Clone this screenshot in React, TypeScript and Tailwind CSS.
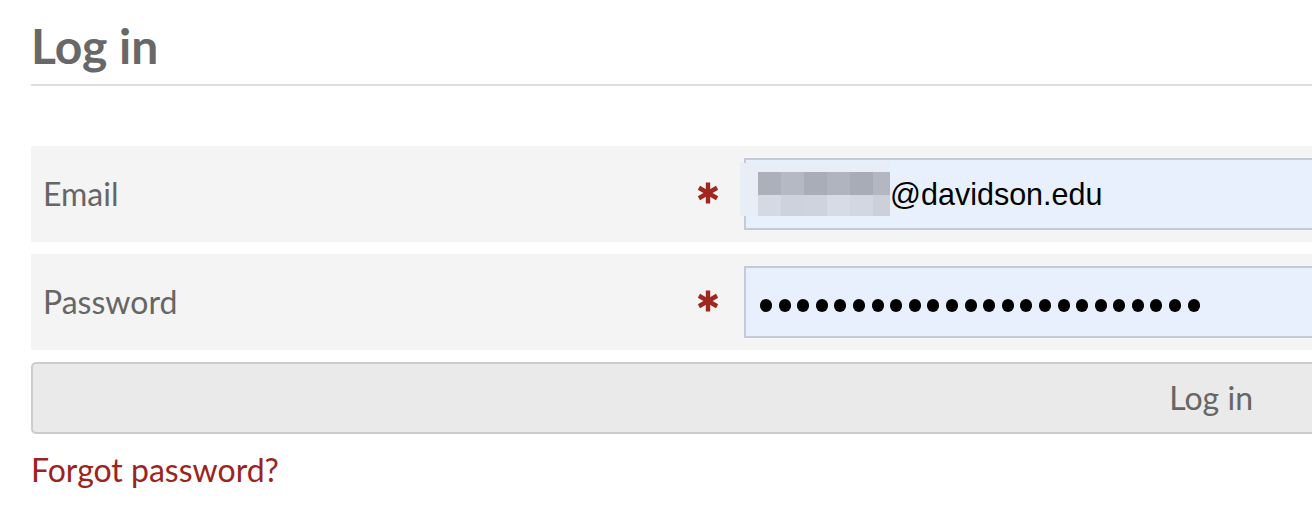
import React from 'react';

const dark = ['#abb0ba', '#b5b9c3', '#a9adb7', '#b0b4be', '#a8acb6', '#b3b7c1'];
const light = ['#d5d9e3', '#cdd2dc', '#cfd3dd', '#d7dbe5', '#d3d7e1', '#ccd0da'];
const widths = [23, 23, 23, 23, 23, 17];

function Required() {
  return (
    <svg width="22" height="22" viewBox="0 0 22 22" className="shrink-0 -mt-[3px]" aria-label="required">
      <g stroke="#a0271f" strokeWidth="4.4">
        <line x1="11" y1="0.5" x2="11" y2="21.5" />
        <line x1="1.9" y1="5.75" x2="20.1" y2="16.25" />
        <line x1="1.9" y1="16.25" x2="20.1" y2="5.75" />
      </g>
    </svg>
  );
}

function Redacted() {
  return (
    <span className="relative flex h-[44px] shrink-0">
      <span className="absolute -left-[18px] -top-[9px] w-[150px] h-[53px] bg-[#e9eef6]" />
      {widths.map((w, i) => (
        <span key={i} className="relative flex flex-col" style={{ width: w }}>
          <span className="h-[23px]" style={{ background: dark[i] }} />
          <span className="h-[21px]" style={{ background: light[i] }} />
        </span>
      ))}
    </span>
  );
}

function Row({ label, children }: { label: string; children: React.ReactNode }) {
  return (
    <div className="flex items-center h-[96px] bg-[#f4f4f4]">
      <label className="w-[666px] pl-[12px] text-[32px] leading-[38px] text-[#666666]">{label}</label>
      <Required />
      <div className="ml-[25px] flex-1 h-[72px] border-2 border-[#c4cad7] bg-[#e8f0fe] flex items-center">
        {children}
      </div>
    </div>
  );
}

export default function App() {
  return (
    <div className="w-[1312px] h-[522px] overflow-hidden bg-white font-['Lato','Liberation_Sans',sans-serif]">
      <div className="w-[1400px] pl-[31px] pt-[17px]">
        <h1 className="text-[48px] leading-[58px] font-bold text-[#686868]">Log in</h1>
        <div className="mt-[9px] h-[2px] bg-[#dddddd]" />

        <div className="mt-[60px] flex flex-col gap-[12px]">
          <Row label="Email">
            <div className="pl-[12px] flex items-center">
              <Redacted />
              <span className="font-['Liberation_Sans','Arial',sans-serif] text-[30.5px] leading-[36px] text-black">
                @davidson.edu
              </span>
            </div>
          </Row>
          <Row label="Password">
            <div className="pl-[14px] pt-[6px] flex items-center gap-[6.6px]" aria-label="password">
              {Array.from({ length: 24 }).map((_, i) => (
                <span key={i} className="w-[12px] h-[13px] rounded-full bg-black" />
              ))}
            </div>
          </Row>

          <button className="h-[72px] rounded-[5px] border-2 border-[#cccccc] bg-[#eaeaea] flex items-center justify-end pr-[145px] text-[32px] leading-[38px] text-[#666666]">
            Log in
          </button>
        </div>

        <a href="#" className="block mt-[17px] text-[32px] leading-[38px] text-[#9b2420]">
          Forgot password?
        </a>
      </div>
    </div>
  );
}
